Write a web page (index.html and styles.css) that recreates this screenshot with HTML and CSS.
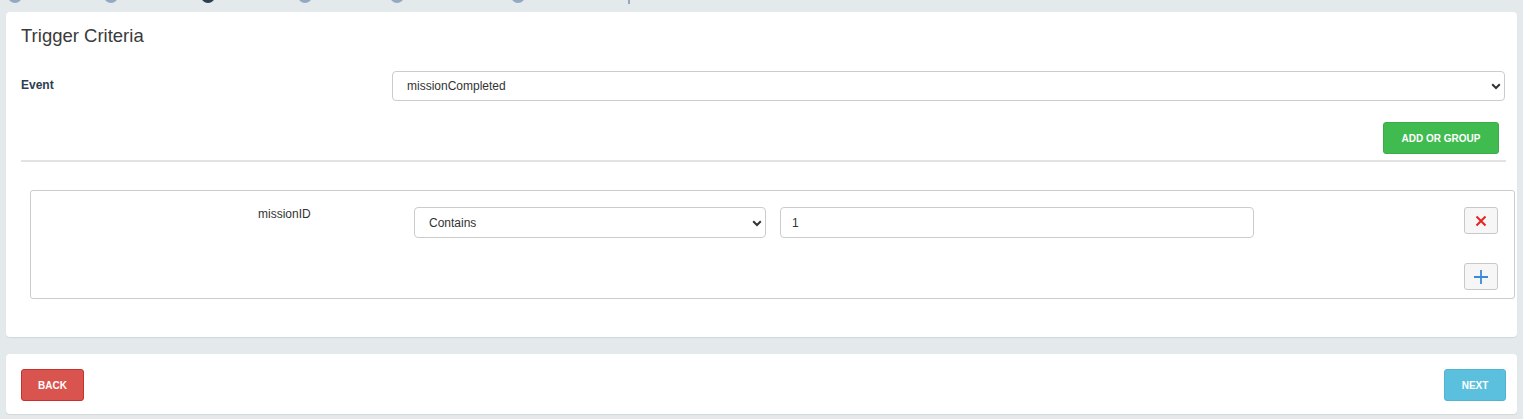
FILE: index.html
```html
<!DOCTYPE html>
<html>
<head>
<meta charset="utf-8">
<link rel="stylesheet" href="styles.css">
</head>
<body>
<div class="steps">
  <span class="dot d1"></span>
  <span class="dot d2"></span>
  <span class="dot d3 active"></span>
  <span class="dot d4"></span>
  <span class="dot d5"></span>
  <span class="dot d6"></span>
  <span class="tick"></span>
</div>
<section class="card main">
  <h2 class="title">Trigger Criteria</h2>
  <div class="event-row">
    <label class="event-label">Event</label>
    <div class="select-wrap">
      <select class="field select"><option>missionCompleted</option></select>
      <svg class="chev" width="10" height="7" viewBox="0 0 10 7"><path d="M1.2 1.3 L5 5 L8.8 1.3" fill="none" stroke="#333" stroke-width="2"/></svg>
    </div>
  </div>
  <div class="actions">
    <button class="btn green">ADD OR GROUP</button>
  </div>
  <div class="rule"></div>
  <div class="group">
    <div class="cond-label">missionID</div>
    <div class="select-wrap">
      <select class="field select"><option>Contains</option></select>
      <svg class="chev" width="10" height="7" viewBox="0 0 10 7"><path d="M1.2 1.3 L5 5 L8.8 1.3" fill="none" stroke="#333" stroke-width="2"/></svg>
    </div>
    <input class="field input" value="1">
    <button class="icon-btn">
      <svg width="12" height="12" viewBox="0 0 12 12"><path d="M1.5 1.5 L10.5 10.5 M10.5 1.5 L1.5 10.5" stroke="#e8231f" stroke-width="2"/></svg>
    </button>
    <button class="icon-btn plus">
      <svg width="16" height="16" viewBox="0 0 16 16"><path d="M8 1 V15 M1 8 H15" stroke="#3a8ad8" stroke-width="1.8"/></svg>
    </button>
  </div>
</section>
<section class="card footer">
  <button class="btn red">BACK</button>
  <button class="btn blue">NEXT</button>
</section>
</body>
</html>
```
FILE: styles.css
```css
* { box-sizing: border-box; }
html, body { margin: 0; padding: 0; }
body {
  background: #e4e9ec;
  font-family: "Liberation Sans", Arial, sans-serif;
  color: #333;
  width: 1523px;
  height: 419px;
  overflow: hidden;
}
.steps {
  height: 12px;
  display: flex;
  align-items: flex-start;
}
.dot {
  width: 14px;
  height: 14px;
  border-radius: 50%;
  background: #93a9c3;
  margin-top: -11px;
  flex: none;
}
.dot.active { background: #2c3e50; }
.d1 { margin-left: 8px; }
.d2 { margin-left: 82px; }
.d3 { margin-left: 83px; }
.d4 { margin-left: 83px; }
.d5 { margin-left: 78px; }
.d6 { margin-left: 107px; }
.tick {
  width: 2px;
  height: 4px;
  background: #93a9c3;
  margin-left: 103px;
  flex: none;
}
.card {
  background: #fff;
  margin: 0 6px;
  border-radius: 4px;
  box-shadow: 0 1px 1px rgba(0,0,0,0.08);
}
.main {
  height: 325px;
  padding: 14px 11px 0 15px;
  display: flex;
  flex-direction: column;
}
.title {
  margin: 0;
  font-size: 18.5px;
  line-height: 20px;
  font-weight: normal;
  color: #3a3a3a;
}
.event-row {
  margin-top: 25px;
  display: grid;
  grid-template-columns: 371px 1fr;
  align-items: center;
  padding-right: 1px;
}
.event-label {
  font-size: 12px;
  font-weight: bold;
  color: #2c3e50;
  margin-top: -2px;
}
.select-wrap { position: relative; }
.field {
  display: block;
  width: 100%;
  border: 1px solid #cccccc;
  border-radius: 4px;
  background: #fff;
  font-family: "Liberation Sans", Arial, sans-serif;
  font-size: 12px;
  color: #333;
  padding: 0 14px;
  outline: none;
}
.select {
  -webkit-appearance: none;
  appearance: none;
  height: 30px;
}
.input { padding: 0 11px; }
.chev {
  position: absolute;
  right: 4px;
  top: 50%;
  margin-top: -3px;
  pointer-events: none;
}
.actions {
  margin-top: 21px;
  display: flex;
  justify-content: flex-end;
  padding-right: 7px;
}
.btn {
  border: 1px solid transparent;
  border-radius: 3px;
  height: 32px;
  color: #fff;
  font-family: "Liberation Sans", Arial, sans-serif;
  font-weight: bold;
  font-size: 10px;
  padding: 0 8px;
  cursor: pointer;
}
.green { background: #40bb4f; border-color: #3aad49; width: 116px; }
.red { background: #d9534f; border-color: #c9302c; width: 63px; }
.blue { background: #5bc0de; border-color: #52b3d0; width: 62px; }
.rule {
  margin-top: 6px;
  height: 2px;
  background: #e2e2e2;
}
.group {
  margin: 28px -9px 0 9px;
  height: 109px;
  border: 1px solid #cccccc;
  border-radius: 3px;
  padding: 16px 16px 8px 0;
  display: grid;
  grid-template-columns: 369px 352px 474px 1fr;
  grid-template-rows: 31px 27px;
  column-gap: 14px;
  row-gap: 25px;
  align-items: start;
}
.group .cond-label {
  grid-column: 1;
  padding-left: 227px;
  font-size: 12px;
  line-height: 14px;
  color: #333;
  white-space: nowrap;
}
.group .select { height: 31px; }
.group .input { height: 31px; }
.icon-btn {
  width: 34px;
  height: 27px;
  justify-self: end;
  background: #f6f6f6;
  border: 1px solid #c8c8c8;
  border-radius: 3px;
  display: flex;
  align-items: center;
  justify-content: center;
  padding: 0;
}
.icon-btn.plus { grid-column: 4; grid-row: 2; }
.footer {
  margin-top: 17px;
  height: 60px;
  padding: 15px 11px 13px 15px;
  display: flex;
  justify-content: space-between;
  align-items: flex-start;
}
```
